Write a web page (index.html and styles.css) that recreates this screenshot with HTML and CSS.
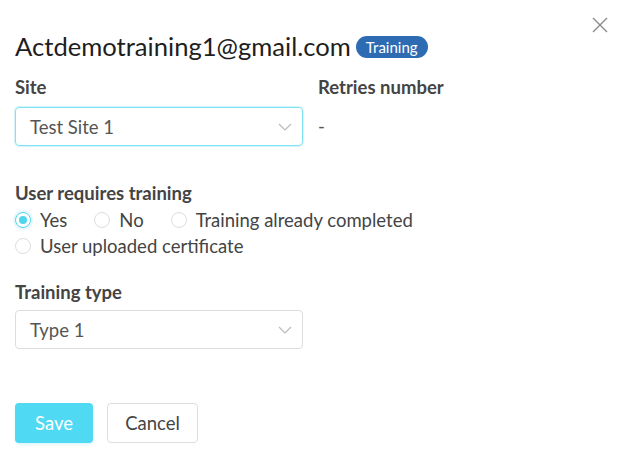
FILE: index.html
```html
<!DOCTYPE html>
<html>

<head>
    <title>Edit User Training</title>
    <link rel="stylesheet" href="styles.css">
</head>

<body>
    <div class="modal">
        <button class="close" aria-label="Close">
            <svg width="16" height="16" viewBox="0 0 16 16"><path d="M1 1L15 15M15 1L1 15" stroke="#8a8a8a" stroke-width="1.4" fill="none"/></svg>
        </button>

        <h2 class="title">Actdemotraining1@gmail.com <span class="badge">Training</span></h2>

        <div class="row">
            <div class="field site">
                <label class="label">Site</label>
                <div class="select focused">
                    <span>Test Site 1</span>
                    <svg class="chevron" width="14" height="8" viewBox="0 0 14 8"><path d="M1 1L7 7L13 1" stroke="#bbb" stroke-width="1.2" fill="none"/></svg>
                </div>
            </div>
            <div class="field">
                <label class="label">Retries number</label>
                <div class="value">-</div>
            </div>
        </div>

        <div class="group">
            <label class="label">User requires training</label>
            <div class="radios">
                <label class="radio checked"><span class="dot"></span>Yes</label>
                <label class="radio"><span class="dot"></span>No</label>
                <label class="radio"><span class="dot"></span>Training already completed</label>
                <label class="radio"><span class="dot"></span>User uploaded certificate</label>
            </div>
        </div>

        <div class="group type">
            <label class="label">Training type</label>
            <div class="select">
                <span>Type 1</span>
                <svg class="chevron" width="14" height="8" viewBox="0 0 14 8"><path d="M1 1L7 7L13 1" stroke="#bbb" stroke-width="1.2" fill="none"/></svg>
            </div>
        </div>

        <div class="actions">
            <button class="btn save">Save</button>
            <button class="btn cancel">Cancel</button>
        </div>
    </div>
</body>

</html>
```

FILE: styles.css
```css
body {
    margin: 0;
    font-family: Lato, "Open Sans", sans-serif;
    color: #333;
    background: #fff;
}

.modal {
    position: relative;
    width: 621px;
    height: 465px;
    padding: 30px 15px 0;
    box-sizing: border-box;
}

.close {
    position: absolute;
    top: 17px;
    right: 13px;
    padding: 0;
    border: none;
    background: none;
    cursor: pointer;
}

.title {
    margin: 0;
    font-size: 25.6px;
    font-weight: 400;
    color: #1e1e1e;
    line-height: 32px;
    display: flex;
    align-items: center;
    gap: 5px;
}

.badge {
    background: #2d6bb2;
    color: #fff;
    font-size: 15px;
    line-height: 22px;
    padding: 0 10px;
    border-radius: 11px;
    margin-top: 2px;
}

.row {
    display: flex;
    gap: 15px;
    margin-top: 13px;
}

.site {
    width: 288px;
}

.label {
    display: block;
    font-size: 18.5px;
    font-weight: 700;
    color: #444;
    line-height: 24px;
    margin-bottom: 8px;
}

.select {
    width: 288px;
    height: 39px;
    box-sizing: border-box;
    border: 1px solid #ddd;
    border-radius: 4px;
    padding: 0 10px 0 14px;
    display: flex;
    align-items: center;
    justify-content: space-between;
    font-size: 18.5px;
    color: #555;
}

.select.focused {
    border-color: #7fe3f3;
    box-shadow: 0 0 0 1px #d5f6fb;
}

.value {
    font-size: 18.5px;
    line-height: 39px;
    color: #555;
}

.group {
    margin-top: 35px;
}

.group .label {
    margin-bottom: 3px;
}

.radios {
    display: flex;
    flex-wrap: wrap;
    width: 450px;
    row-gap: 2px;
}

.radio {
    display: flex;
    align-items: center;
    font-size: 18.5px;
    line-height: 24px;
    color: #444;
    margin-right: 27px;
}

.dot {
    width: 16px;
    height: 16px;
    border: 1px solid #ddd;
    border-radius: 50%;
    margin-right: 9px;
    box-sizing: border-box;
    position: relative;
}

.radio.checked .dot {
    border-color: #4dd6ee;
    box-shadow: 0 0 0 2px #e3f8fc;
}

.radio.checked .dot::after {
    content: "";
    position: absolute;
    left: 3px;
    top: 3px;
    width: 8px;
    height: 8px;
    border-radius: 50%;
    background: #4dd6ee;
}

.type {
    margin-top: 22px;
}

.type .label {
    margin-bottom: 6px;
}

.actions {
    display: flex;
    gap: 14px;
    margin-top: 54px;
}

.btn {
    height: 40px;
    border-radius: 4px;
    font-family: inherit;
    font-size: 18.5px;
    cursor: pointer;
}

.save {
    width: 78px;
    background: #4fd9f2;
    border: none;
    color: #fff;
    box-shadow: 0 2px 3px #e0f7fb;
}

.cancel {
    width: 91px;
    background: #fff;
    border: 1px solid #ddd;
    color: #444;
}
```
